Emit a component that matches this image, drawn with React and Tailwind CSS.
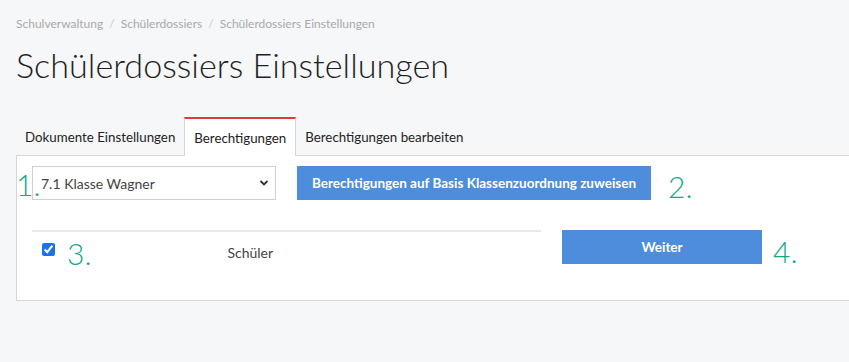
import { useState } from 'react';

const font = { fontFamily: 'Lato, "Noto Sans", sans-serif' };

export default function App() {
  const [klasse, setKlasse] = useState('7.1 Klasse Wagner');
  const [checked, setChecked] = useState(true);

  return (
    <div className="min-h-screen w-full overflow-hidden bg-[#f6f7f9] pl-4 pt-[16px]" style={font}>
      {/* Breadcrumb */}
      <div className="flex items-center gap-[6px] text-[12px] leading-4 text-[#a9a9a9]">
        <span>Schulverwaltung</span>
        <span className="text-[#c8c8c8]">/</span>
        <span>Schülerdossiers</span>
        <span className="text-[#c8c8c8]">/</span>
        <span>Schülerdossiers Einstellungen</span>
      </div>

      <h1 className="mt-[13px] text-[34.2px] font-light leading-[40px] text-[#1f1f1f]">
        Schülerdossiers Einstellungen
      </h1>

      {/* Tabs */}
      <div className="mt-[32px] flex text-[13.3px] text-[#222]">
        <div className="flex h-[38px] items-center px-[9px] pt-[3px]">Dokumente Einstellungen</div>
        <div className="-mb-px flex h-[39px] items-center border-x border-t-2 border-x-[#d6d6d6] border-t-[#e03b3b] bg-white px-[9px] pt-[3px]">
          Berechtigungen
        </div>
        <div className="flex h-[38px] items-center px-[9px] pt-[3px]">Berechtigungen bearbeiten</div>
      </div>

      {/* Panel */}
      <div className="w-[840px] border border-[#d6d6d6] bg-white px-[15px] pb-[30px] pt-[10px]">
        <div className="relative flex h-[34px] items-start">
          <span className="absolute left-[-16px] top-[1px] text-[30px] font-light leading-[34px] text-[#12a888]">1.</span>
          <div className="relative h-[34px] w-[244px]">
            <select
              value={klasse}
              onChange={(e) => setKlasse(e.target.value)}
              className="h-full w-full appearance-none border border-[#cfcfcf] bg-transparent pl-[8px] text-[14px] text-[#444] outline-none"
              style={font}
            >
              <option>7.1 Klasse Wagner</option>
              <option>7.2 Klasse Müller</option>
            </select>
            <svg className="pointer-events-none absolute right-[7px] top-[13px]" width="10" height="8" viewBox="0 0 10 8">
              <path d="M1.5 2 L5 5.5 L8.5 2" fill="none" stroke="#333" strokeWidth="1.8" />
            </svg>
          </div>
          <button className="ml-[21px] h-[34px] w-[354px] bg-[#4d8ddb] text-[13.5px] font-bold text-white">
            Berechtigungen auf Basis Klassenzuordnung zuweisen
          </button>
          <span className="ml-[17px] mt-[3px] text-[30px] font-light leading-[34px] text-[#12a888]">2.</span>
        </div>

        <div className="mt-[30px] flex h-[40px] items-start">
          <div className="h-[40px] w-[509px] border-t-2 border-[#eaeaea]">
            <div className="flex h-[38px] items-center">
              <input
                type="checkbox"
                checked={checked}
                onChange={(e) => setChecked(e.target.checked)}
                className="mb-[3px] ml-[10px] h-[13px] w-[13px] accent-[#1a73e8]"
              />
              <span className="ml-[12px] mt-[4px] text-[30px] font-light leading-[34px] text-[#12a888]">3.</span>
              <span className="ml-[136px] mt-[2px] text-[14px] text-[#444]">Schüler</span>
            </div>
          </div>
          <button className="ml-[21px] h-[34px] w-[200px] bg-[#4d8ddb] text-[13.5px] font-bold text-white">
            Weiter
          </button>
          <span className="ml-[11px] mt-[4px] text-[30px] font-light leading-[34px] text-[#12a888]">4.</span>
        </div>
      </div>
    </div>
  );
}
